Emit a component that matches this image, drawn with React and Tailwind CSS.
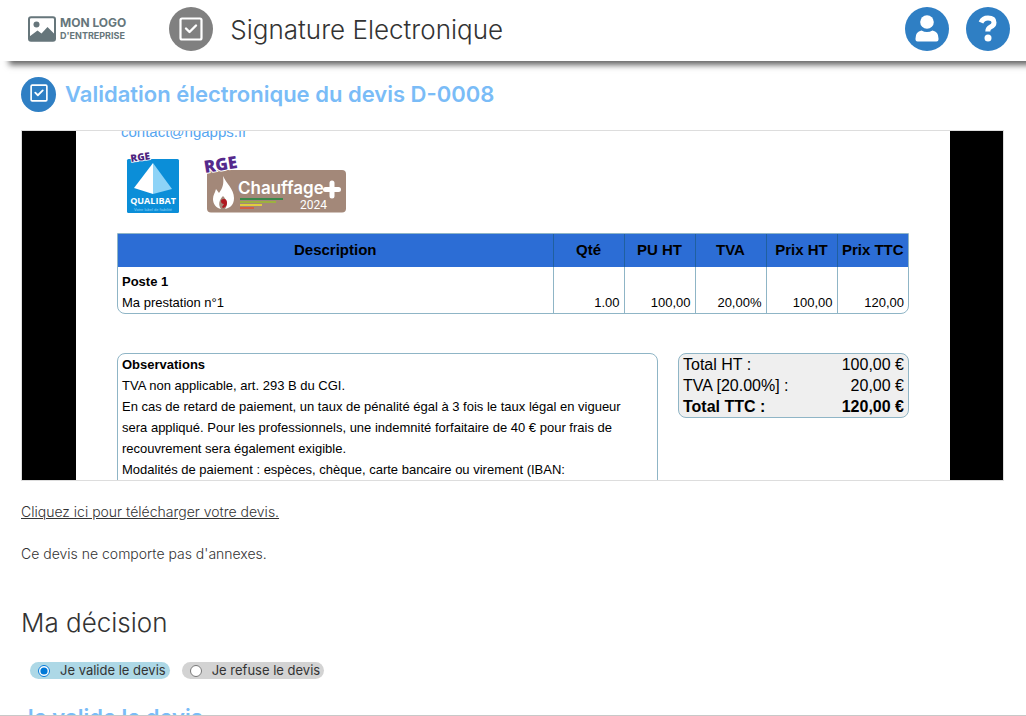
function CheckMark({ className }) {
  return (
    <svg viewBox="0 0 24 24" fill="none" stroke="white" strokeLinecap="round" strokeLinejoin="round" className={className} aria-hidden="true">
      <rect x="1.5" y="1.5" width="21" height="21" rx="1.5" strokeWidth="2.2" />
      <path d="M7 11.5l3.5 3.5L17 8.5" strokeWidth="2.4" />
    </svg>
  );
}

function CompanyLogo() {
  return (
    <div className="flex items-center gap-1 text-[#66767b]">
      <svg viewBox="0 0 28 26" className="h-[26px] w-7" aria-hidden="true">
        <rect x="1" y="1.2" width="26" height="23.5" rx="2" fill="none" stroke="currentColor" strokeWidth="2" />
        <circle cx="8.5" cy="8.5" r="3" fill="currentColor" />
        <path d="M1.500 24v-3.500l8-6 4 3 6-6.500 7 7V24z" fill="currentColor" />
      </svg>
      <div className="flex flex-col font-bold">
        <span className="text-[12px] leading-[14px]">MON LOGO</span>
        <span className="text-[9px] leading-[12px]">D'ENTREPRISE</span>
      </div>
    </div>
  );
}

function QualibatLogo() {
  return (
    <svg viewBox="0 0 54 63" className="h-[63px] w-[54px] overflow-visible" role="img" aria-label="RGE Qualibat">
      <rect x="1" y="8" width="52" height="54" rx="1.500" fill="#0b8ed8" />
      <path d="M27 12L8 37l19 6z" fill="#fff" />
      <path d="M27 12l19 26-19 5z" fill="#8dd3f7" />
      <text x="27" y="53" textAnchor="middle" fontSize="9" fontWeight="700" fill="#fff" fontFamily="'Open Sans', sans-serif">QUALIBAT</text>
      <text x="27" y="60" textAnchor="middle" fontSize="4" fill="#8dd3f7">Votre label de fiabilité</text>
      <text x="5" y="11" fontSize="10" fontWeight="800" fill="#4d2480" stroke="#fff" strokeWidth="1.5" paintOrder="stroke" fontFamily="'Open Sans', sans-serif" transform="rotate(-8 5 11)">RGE</text>
    </svg>
  );
}

function ChauffageLogo() {
  return (
    <svg viewBox="0 0 146 63" className="h-[63px] w-[146px] overflow-visible" role="img" aria-label="RGE Chauffage plus 2024">
      <rect x="5" y="19" width="139" height="42.500" rx="4" fill="#a38879" />
      <path d="M21 25c3 7 11 13 11 22 0 7-4 10-9 11 3-4 2-9-2-13-4 4-5 9-2 13-5-1-8-5-8-10 0-4 2-6 3-10l3 4c4-5 5-10 4-17z" fill="#fff" />
      <path d="M19 50q0-2 3-2 3 0 3 4 0 4-4 5l-1-1 2-3q-3 0-3-3z" fill="#b01820" />
      <path d="M38 48h43" stroke="#168a3c" strokeWidth="1.500" />
      <path d="M38 51h36" stroke="#9bbf2c" strokeWidth="1.500" />
      <path d="M38 54h22" stroke="#f4e52d" strokeWidth="1.500" />
      <path d="M38 57h14" stroke="#e35132" strokeWidth="1.500" />
      <text x="36" y="43" fontSize="17" fontWeight="600" fill="#fff" fontFamily="Inter, sans-serif">Chauffage</text>
      <path d="M130 32v13M123.500 38.500h13" stroke="#fff" strokeWidth="5" strokeLinecap="round" />
      <text x="98" y="58" fontSize="12" fill="#fff" fontFamily="Roboto, sans-serif">2024</text>
      <text x="3" y="22" fontSize="17" fontWeight="800" fill="#55298c" stroke="#fff" strokeWidth="2" paintOrder="stroke" fontFamily="'Open Sans', sans-serif" transform="rotate(-9 3 22)">RGE</text>
    </svg>
  );
}

const columns = ["Qté", "PU HT", "TVA", "Prix HT", "Prix TTC"];
const values = ["1.00", "100,00", "20,00%", "100,00", "120,00"];

function QuoteTable() {
  return (
    <div className="overflow-hidden rounded-b-lg border border-[#8fb5c6]">
      <table className="w-full table-fixed border-collapse">
        <thead>
          <tr className="h-[33px] bg-[#2c6dd5] text-[15px]">
            <th className="font-bold">Description</th>
            {columns.map((c) => (
              <th key={c} className="w-[71px] border-l border-[#20609f] font-bold whitespace-nowrap">{c}</th>
            ))}
          </tr>
        </thead>
        <tbody>
          <tr className="leading-[21px]">
            <td className="px-1 pt-1">
              <p className="font-bold">Poste 1</p>
              <p>Ma prestation n°1</p>
            </td>
            {values.map((v, i) => (
              <td key={i} className="border-l border-[#8fb5c6] px-1 text-right align-bottom">{v}</td>
            ))}
          </tr>
        </tbody>
      </table>
    </div>
  );
}

function Totals() {
  return (
    <dl className="w-[231px] rounded-lg border border-[#8fb5c6] bg-[#efefef] px-1 text-[16px] leading-[21px]">
      <div className="flex justify-between"><dt>Total HT :</dt><dd>100,00 €</dd></div>
      <div className="flex justify-between"><dt>TVA [20.00%] :</dt><dd>20,00 €</dd></div>
      <div className="flex justify-between font-bold"><dt>Total TTC :</dt><dd>120,00 €</dd></div>
    </dl>
  );
}

function QuoteViewer() {
  return (
    <section aria-label="Devis" className="flex h-[351px] flex-col overflow-hidden border border-[#dddddd] bg-black pr-[53px] pl-[54px]">
      <div className="flex-none bg-white px-[41px] font-['Liberation_Sans',Arial,sans-serif] text-[13px] text-black">
        <div className="-mt-2 flex h-[18px] flex-col">
          <a href="mailto:contact@ngapps.fr" className="px-1 text-[15px] leading-[18px] text-[#56a5f0]">contact@ngapps.fr</a>
        </div>
        <div className="flex gap-[22px] pt-[10px] pl-[9px]">
          <QualibatLogo />
          <ChauffageLogo />
        </div>
        <div className="pt-[19px]">
          <QuoteTable />
        </div>
        <div className="flex items-start gap-5 pt-[39px]">
          <div className="flex-1 rounded-lg border border-[#8fb5c6] px-1 pb-4 leading-[21px]">
            <p className="font-bold">Observations</p>
            <p>TVA non applicable, art. 293 B du CGI.</p>
            <p className="pr-4">En cas de retard de paiement, un taux de pénalité égal à 3 fois le taux légal en vigueur sera appliqué. Pour les professionnels, une indemnité forfaitaire de 40 € pour frais de recouvrement sera également exigible.</p>
            <p>Modalités de paiement : espèces, chèque, carte bancaire ou virement (IBAN:</p>
          </div>
          <Totals />
        </div>
      </div>
    </section>
  );
}

export default function App() {
  return (
    <div className="flex h-screen flex-col overflow-hidden border-b border-[#c8c8c8] bg-white font-['Inter',sans-serif] text-[#333]">
      <header className="flex h-[61px] flex-none items-center bg-white pr-4 pb-[3px] pl-7 shadow-[8px_5px_6px_-1px_#666]">
        <CompanyLogo />
        <span className="ml-[43px] flex size-11 items-center justify-center rounded-full bg-[#808080]">
          <CheckMark className="size-6" />
        </span>
        <h1 className="ml-[17px] flex-1 text-[26px] font-light">Signature Electronique</h1>
        <div className="flex gap-[17px]">
          <button type="button" aria-label="Mon compte" className="flex size-11 items-center justify-center rounded-full bg-[#2f7fc4]">
            <svg viewBox="0 0 24 28" className="h-7 w-6" fill="white" aria-hidden="true">
              <circle cx="12" cy="7" r="6.800" />
              <path d="M6.500 15.500q5.500 3 11 0 6 1 6 8v1q0 2-2 2h-19q-2 0-2-2v-1q0-7 6-8z" />
            </svg>
          </button>
          <button type="button" aria-label="Aide" className="flex size-11 items-center justify-center rounded-full bg-[#2f7fc4]">
            <svg viewBox="0 0 20 28" className="h-7 w-5" fill="none" aria-hidden="true">
              <path d="M3 7.500q2-4.500 7-4.500 6 0 6 4.500 0 3-3.500 4.500-2.700 1.200-2.700 4.500" stroke="white" strokeWidth="5" />
              <circle cx="10" cy="23" r="3.500" fill="white" />
            </svg>
          </button>
        </div>
      </header>

      <main className="flex-1 overflow-hidden pt-4 pr-[22px] pl-[21px]">
        <div className="mb-[18px] flex items-center gap-[9px]">
          <span className="flex size-[35px] items-center justify-center rounded-full bg-[#2f7fc4]">
            <CheckMark className="mb-1 size-[18px]" />
          </span>
          <h2 className="text-[22px] font-semibold text-[#7abcf7]">Validation électronique du devis D-0008</h2>
        </div>

        <QuoteViewer />

        <p className="mt-5 text-[14px] leading-[21px] font-light">
          <a href="#devis" className="underline">Cliquez ici pour télécharger votre devis.</a>
        </p>
        <p className="mt-[21px] text-[14px] leading-[21px] font-light">Ce devis ne comporte pas d'annexes.</p>

        <h2 className="mt-[41px] text-[26px] leading-[36px] font-light">Ma décision</h2>

        <div className="mt-[21px] ml-[9px] flex gap-3 text-[13px] leading-[17px]">
          <label className="flex items-center gap-[10px] rounded-full bg-[#add8e6] pr-1 pl-2">
            <input type="radio" name="decision" defaultChecked className="size-3 accent-[#0078d7]" />
            Je valide le devis
          </label>
          <label className="flex items-center gap-[10px] rounded-full bg-[#d3d3d3] pr-1 pl-2">
            <input type="radio" name="decision" className="size-3 accent-[#0078d7]" />
            Je refuse le devis
          </label>
        </div>

        <h3 className="mt-6 text-[22px] leading-[28px] font-semibold text-[#7abcf7]">Je valide le devis</h3>
      </main>
    </div>
  );
}
